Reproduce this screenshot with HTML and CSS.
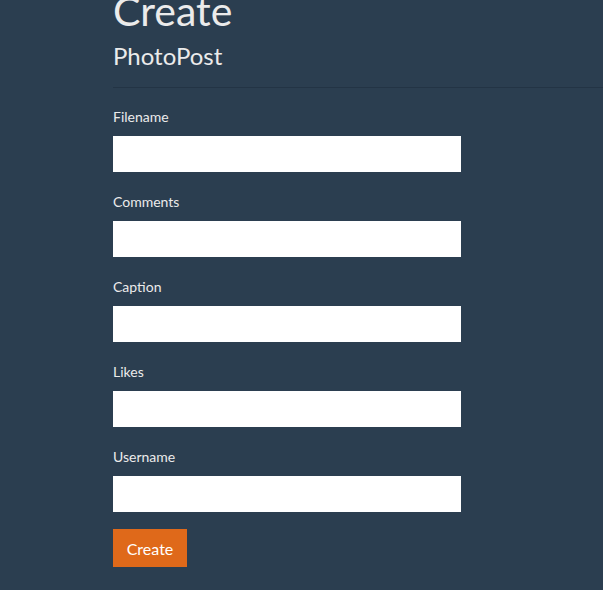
FILE: index.html
```html
<!DOCTYPE html>
<html>
<head>
<meta charset="utf-8">
<link rel="stylesheet" href="styles.css">
</head>
<body>
<div class="container">
  <h1 class="title">Create</h1>
  <h4 class="subtitle">PhotoPost</h4>
  <hr class="rule">
  <form class="form">
    <div class="group">
      <label class="label">Filename</label>
      <input class="input" type="text">
    </div>
    <div class="group">
      <label class="label">Comments</label>
      <input class="input" type="text">
    </div>
    <div class="group">
      <label class="label">Caption</label>
      <input class="input" type="text">
    </div>
    <div class="group">
      <label class="label">Likes</label>
      <input class="input" type="text">
    </div>
    <div class="group">
      <label class="label">Username</label>
      <input class="input" type="text">
    </div>
    <div class="actions">
      <button class="btn" type="button">Create</button>
    </div>
  </form>
</div>
</body>
</html>
```
FILE: styles.css
```css
html, body {
  margin: 0;
  padding: 0;
  background: #2b3e50;
  height: 100%;
  overflow: hidden;
}
body {
  font-family: Lato, "Open Sans", sans-serif;
  color: #ebebeb;
}
.container {
  padding-left: 113px;
}
.title {
  margin: -12px 0 0 0;
  font-size: 41px;
  font-weight: 400;
  line-height: 45px;
  color: #ebebeb;
}
.subtitle {
  margin: 10px 0 0 0;
  font-size: 24px;
  font-weight: 400;
  line-height: 26px;
  color: #ebebeb;
}
.rule {
  margin: 18px 0 0 0;
  border: 0;
  border-top: 1px solid #233445;
  height: 0;
}
.form {
  display: flex;
  flex-direction: column;
  padding-top: 19px;
}
.group {
  display: flex;
  flex-direction: column;
  align-items: flex-start;
  margin-bottom: 20px;
}
.label {
  font-size: 14px;
  line-height: 20px;
  margin-bottom: 9px;
  color: #ebebeb;
}
.input {
  width: 348px;
  height: 36px;
  box-sizing: border-box;
  border: 0;
  border-radius: 0;
  background: #fff;
  margin: 0;
  padding: 0 12px;
}
.actions {
  margin-top: -3px;
}
.btn {
  background: #df691a;
  color: #fff;
  border: 0;
  border-radius: 0;
  font-family: Lato, "Open Sans", sans-serif;
  font-size: 16px;
  width: 74px;
  height: 38px;
  padding: 0;
}
```
